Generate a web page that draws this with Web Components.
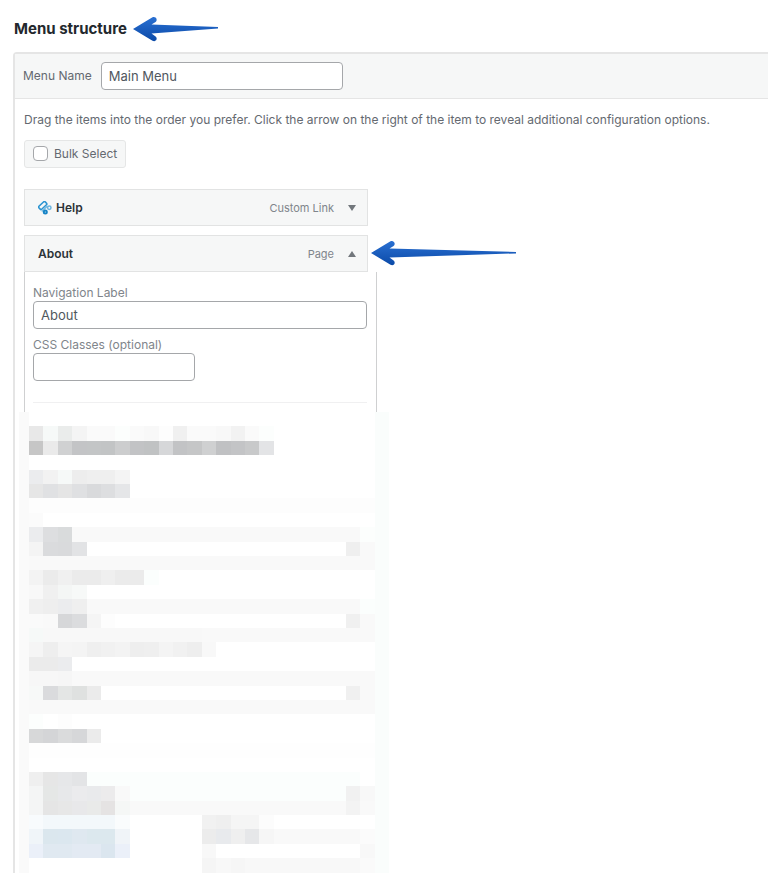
<!DOCTYPE html>
<html lang="en">
<head>
<meta charset="utf-8">
<meta name="viewport" content="width=device-width, initial-scale=1">
<title>Menu structure</title>
<style>
  body { margin: 0; background: #fff; color: #646970; font: 12px/16px Inter, "Liberation Sans", sans-serif; }
</style>
</head>
<body>
<menu-structure></menu-structure>

<script>
const define = (name, html, setup) => {
  const tpl = document.createElement('template');
  tpl.innerHTML = html;
  customElements.define(name, class extends HTMLElement {
    constructor() {
      super();
      this.attachShadow({ mode: 'open' }).append(tpl.content.cloneNode(true));
    }
    connectedCallback() { if (setup) setup(this, this.shadowRoot); }
  });
};

/* Arrow pointing left; the "long" attribute selects the longer shaft. */
define('pointer-arrow', `
  <style>
    :host { display: block; line-height: 0; }
    svg { display: block; overflow: visible; }
  </style>
  <svg height="26" aria-hidden="true">
    <defs><linearGradient id="g" x1="0" y1="0" x2="0" y2="1">
      <stop offset="0" stop-color="#2a70d2"/><stop offset="1" stop-color="#0b4aa8"/>
    </linearGradient></defs>
    <path fill="url(#g)"/>
  </svg>`, (host, root) => {
  const len = host.hasAttribute('long') ? 145 : 85;
  const tail = host.hasAttribute('long') ? 12.7 : 11.7;
  root.querySelector('svg').setAttribute('width', len);
  root.querySelector('path').setAttribute('d',
    `M0 13 L19.500 1.300 C22.500 -.3 25.300 3.800 22.600 6 L18.500 8.600 L${len} ${tail - .7} L${len} ${tail + .7} L18.500 17.600 L22.600 20.600 C25.300 23 22.500 26.400 19.500 24.700 Z`);
});

define('text-field', `
  <style>
    :host { display: block; }
    label { display: block; color: #80858b; }
    input { box-sizing: border-box; display: block; width: 100%; height: 28px; margin: 0; padding: 0 7px;
      border: 1px solid #a5a7aa; border-radius: 4px; background: #fff; color: #50575e; font: 13px/20px Inter, "Liberation Sans", sans-serif; }
    :host([inline]) { display: flex; align-items: center; gap: 9px; }
    :host([inline]) label { color: #646970; white-space: nowrap; }
  </style>
  <label for="f"></label><input id="f" type="text">`, (host, root) => {
  root.querySelector('label').textContent = host.getAttribute('label');
  root.querySelector('input').value = host.getAttribute('value') || '';
});

define('bulk-select', `
  <style>
    :host { display: flex; }
    label { display: flex; align-items: center; gap: 6px; height: 26px; padding: 0 8px; border: 1px solid #e5e6e6; border-radius: 3px; background: #f6f7f7; }
    input { appearance: none; box-sizing: border-box; width: 15px; height: 15px; margin: 0 0 2px; border: 1px solid #a5a7aa; border-radius: 4px; background: #fff; }
    input:checked { background: #2271b1; }
  </style>
  <label><input type="checkbox">Bulk Select</label>`);

define('link-icon', `
  <style>:host { display: block; } svg { display: block; }</style>
  <svg width="14" height="14" viewBox="0 0 14 14" fill="none" aria-hidden="true">
    <rect x="-2" y="-4.300" width="4" height="8.600" rx="1" transform="translate(4.700 4.500) rotate(47)" stroke="#2b94d1" stroke-width="1.600"/>
    <path d="M4.200 9.900 L9 5.400" stroke="#7abce2" stroke-width="1.500" stroke-linecap="round"/>
    <circle cx="11.300" cy="6.700" r="1.700" stroke="#6cb4de" stroke-width="1.500"/>
    <circle cx="7.300" cy="11.100" r="1.500" stroke="#1684c6" stroke-width="2"/>
  </svg>`);

define('menu-item', `
  <style>
    :host { display: block; }
    .bar { position: relative; box-sizing: border-box; max-width: 344px; height: 37px; padding: 0 7px 0 13px; border: 1px solid #e2e3e3; background: #f6f7f7; display: flex; align-items: center; }
    .title { display: flex; align-items: center; gap: 4px; flex: 1; color: #2c3338; font-weight: 600; }
    .type { color: #80858b; font-size: 11px; }
    button { width: 16px; height: 16px; margin: 0 0 0 10px; padding: 0; border: 0; background: none; display: grid; place-items: center; }
    button::before { content: ""; border: 4px solid transparent; border-top: 6px solid #72777c; border-bottom: 0; }
    :host([open]) button::before { border-top: 0; border-bottom: 6px solid #72777c; }
    ::slotted([slot=note]) { position: absolute; left: 100%; margin-left: 4px; top: 4px; }
    .body { display: none; box-sizing: border-box; max-width: 353px; border: solid #cfd0d1; border-width: 0 1px; padding: 13px 9px 9px 8px; }
    :host([open]) .body { display: block; }
  </style>
  <div class="bar">
    <span class="title"><slot name="icon"></slot><span id="t"></span></span>
    <span class="type"></span>
    <button type="button"></button>
    <slot name="note"></slot>
  </div>
  <div class="body"><slot></slot></div>`, (host, root) => {
  root.querySelector('#t').textContent = host.getAttribute('label');
  root.querySelector('.type').textContent = host.getAttribute('type');
  const b = root.querySelector('button');
  b.setAttribute('aria-label', 'Toggle ' + host.getAttribute('label'));
  b.onclick = () => host.toggleAttribute('open');
});

/* Pixelated block. Each row starts at the column before the colon and lists
   hex colours, with *n for a run of n cells; | starts a new run. */
const rows = {
  1: '0:e8e8e8 f6f9f8 eaeceb f4f4f4 fafafa*2 fcfefd fafafa f8f8f8 fdfdfd f0f0f0 fafafa*2 f8f8f8 f2f2f2 fafafa fcfefd',
  2: '0:c6c6c6 eaeaea d0d1d2 c3c4c6 c3c5c6 c2c4c5 cccdce c2c3c5 c0c2c3 d6d7d9 c2c3c5 c5c6c7 cfd0d1 c0c1c3 c3c4c6 c8c9ca e3e4e6',
  4: '0:ebecee f2f2f2 f6f9f8 ededed efefef*2 f4f4f4',
  5: '0:e6e6e6 e0e1e3 e5e5e5 dfe0e2 d9dadc dddee0 e5e6e8',
  6: '0:fdfdfd*24',
  7: '0:fbfbfb',
  8: '0:ebecee dddee0 d9dbdc f9f9f9*20 fcfefd',
  9: '0:f4f4f4 dadbdd d9dadc e2e3e5|22:efefef f9f9f9',
  10: '0:f9f9f9*24',
  11: '0:f3f3f3 ebebeb f0f0f0 ebebeb*2 efefef ebebeb*2 fbfefd',
  12: '0:f8f8f8 f0f0f0 f4f6f5 f7f9f8',
  13: '0:f0f0f0 eeeeee ebecee efefef f9f9f9*19 fbfefd',
  14: '0:fafafa f9f9f9 d6d7d9 dbdcde f5f5f5 fdfdfd|22:f0f0f0 f9f9f9',
  15: '0:f6f9f8 f8f8f8*11 f9f9f9*12',
  16: '0:f5f5f5 eeeeee f5f5f5 f4f4f4 efefef f1f1f1 f3f3f3 eeeeee efefef f4f4f4 f1f1f1 eeeeee f8f8f8',
  17: '0:ebebeb*2 ebecee',
  18: '0:f7f7f7*2 f6f6f6 f9f9f9*21',
  19: '0:f7f9f8 dadbdd e4e6e5 dfe1e0 ebebeb|22:f0f0f0 f9f9f9',
  20: '0:f9f9f9*24',
  21: '0:fcfefd ffffff fdfdfd',
  22: '0:d7d8d9 d4d5d7 dadbdc d6d7d9 ebebeb',
  23: '0:fefefe*24',
  25: '0:efefef e6e6e6 e6e7e9 e3e4e6 fbfefd*19',
  26: '0:f4f5f5 e5e7e6 e7e8ea ebebed e9eaec ecebec f9f9f9 fbfefd*15 f1f1f1 f8f8f8',
  27: '0:f4f5f5 e5e5e5 e7e7e7 e8e8ea e9eae9 e5e3e3 f5f7f6 f9f9f9*15 f3f3f3 f9f9f9',
  28: '0:f8fbfd f3f8fb*5 fafcfd|12:f1f1f1 efefef f5f5f5*2 fcfcfc',
  29: '0:f0f5f9 dbe7ee dbe7ef dfe8f0 dce8ee*2 f0f4f8|12:ececec e8eaed efefef e6e7e9 f6f6f6 f9f9f9*6 fbfbfb',
  30: '0:ebf0f9 e0e9f1*2 e3eaf3*2 dbe6ef ebf0f9|12:f8f8f8|23:f8f8f8',
  31: '12:f5f5f5 f8f8f8 f6f6f6 f8f8f8*8 fafafa'
};
define('redacted-area', `
  <style>:host { display: block; } svg { display: block; width: 370px; max-width: 100%; }</style>
  <svg viewBox="0 0 257 320" shape-rendering="crispEdges" role="img" aria-label="Hidden settings"></svg>`, (host, root) => {
  const rect = (x, y, w, h, c) => `<rect x="${x}" y="${y}" width="${w}" height="${h}" fill="#${c}"/>`;
  let out = rect(0, 0, 257, 320, 'ffffff') + rect(0, 0, 7, 320, 'fafafa') + rect(247, 0, 10, 320, 'fafdfc');
  for (const [r, spec] of Object.entries(rows)) for (const run of spec.split('|')) {
    const [start, cells] = run.split(':');
    let col = +start;
    for (const cell of cells.split(' ')) {
      const [c, n = 1] = cell.split('*');
      out += rect(7 + col * 10, r * 10, n * 10, 10, c);
      col += +n;
    }
  }
  root.querySelector('svg').innerHTML = out;
});

define('menu-structure', `
  <style>
    :host { display: block; padding: 16px 0 0 13px; }
    .head { display: flex; align-items: center; gap: 6px; height: 26px; margin-bottom: 10px; }
    h2 { margin: 0 0 0 1px; font-size: 15px; line-height: 20px; font-weight: 700; color: #23282d; }
    .frame { border: solid #e5e5e5; border-width: 2px 0 0 2px; border-radius: 4px 0 0 0; }
    header { padding: 8px; border-bottom: 1px solid #e5e5e5; background: #f6f7f7; }
    header text-field { max-width: 320px; }
    main { padding: 13px 9px 0; }
    p { margin: 0 0 12px; }
    bulk-select { margin-bottom: 21px; }
    .list { display: grid; gap: 9px; }
    .nav { margin-bottom: 8px; }
    .css { max-width: 162px; }
    hr { margin: 21px 0 0; border: 0; border-top: 1px solid #f0f0f1; }
    redacted-area { margin-left: -5px; }
  </style>
  <div class="head"><h2>Menu structure</h2><pointer-arrow></pointer-arrow></div>
  <div class="frame">
    <header><text-field inline label="Menu Name" value="Main Menu"></text-field></header>
    <main>
      <p>Drag the items into the order you prefer. Click the arrow on the right of the item to reveal additional configuration options.</p>
      <bulk-select></bulk-select>
      <div class="list">
        <menu-item label="Help" type="Custom Link"><link-icon slot="icon"></link-icon></menu-item>
        <menu-item label="About" type="Page" open>
          <pointer-arrow slot="note" long></pointer-arrow>
          <text-field class="nav" label="Navigation Label" value="About"></text-field>
          <text-field class="css" label="CSS Classes (optional)"></text-field>
          <hr>
        </menu-item>
      </div>
      <redacted-area></redacted-area>
    </main>
  </div>`);
</script>
</body>
</html>
